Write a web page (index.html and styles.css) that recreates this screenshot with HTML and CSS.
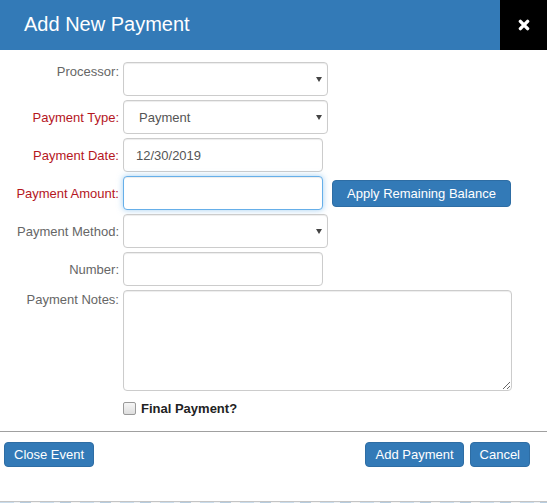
FILE: index.html
```html
<!DOCTYPE html>
<html lang="en">
<head>
  <meta charset="UTF-8" />
  <meta name="viewport" content="width=device-width, initial-scale=1" />
  <title>Add New Payment</title>
  <link rel="stylesheet" href="styles.css">
</head>
<body>

  <div class="modal">
    <div class="modal-header">
      <h2 class="modal-title">Add New Payment</h2>
      <button class="modal-close" type="button" aria-label="Close">
        <svg width="12" height="12" viewBox="0 0 12 12">
          <path d="M2.4 2.4 L9.6 9.6 M9.6 2.4 L2.4 9.6" stroke="#fff" stroke-width="3.4" stroke-linecap="round" />
        </svg>
      </button>
    </div>

    <form class="modal-body">
      <div class="form-grid">
        <label class="form-label label-top" for="processor">Processor:</label>
        <div class="select">
          <select id="processor" class="form-control"><option></option></select>
        </div>

        <label class="form-label required" for="type">Payment Type:</label>
        <div class="select">
          <select id="type" class="form-control"><option>Payment</option></select>
        </div>

        <label class="form-label required" for="date">Payment Date:</label>
        <input id="date" class="form-control input-short" type="text" value="12/30/2019">

        <label class="form-label required" for="amount">Payment Amount:</label>
        <div class="control-group">
          <input id="amount" class="form-control input-short is-focused" type="text">
          <button class="btn btn-apply" type="button">Apply Remaining Balance</button>
        </div>

        <label class="form-label" for="method">Payment Method:</label>
        <div class="select">
          <select id="method" class="form-control"><option></option></select>
        </div>

        <label class="form-label" for="number">Number:</label>
        <input id="number" class="form-control input-short" type="text">

        <label class="form-label label-top" for="notes">Payment Notes:</label>
        <textarea id="notes" class="form-control notes"></textarea>

        <span></span>
        <label class="check">
          <input type="checkbox" class="check-box">
          <span>Final Payment?</span>
        </label>
      </div>
    </form>

    <div class="modal-footer">
      <button class="btn" type="button">Close Event</button>
      <div class="footer-right">
        <button class="btn" type="button">Add Payment</button>
        <button class="btn" type="button">Cancel</button>
      </div>
    </div>
  </div>

  <div class="page-peek"></div>

</body>
</html>
```

FILE: styles.css
```css
body {
  margin: 0;
  font-family: "Liberation Sans", Arial, sans-serif;
  font-size: 13px;
  color: #333;
  background: #fff;
  width: 547px;
  overflow: hidden;
}

.modal {
  height: 501px;
  display: flex;
  flex-direction: column;
  background: #fff;
}

/* header bar */
.modal-header {
  height: 50px;
  display: flex;
  align-items: stretch;
  background: #337ab7;
}

.modal-title {
  flex: 1;
  margin: 0;
  padding: 13px 0 0 24px;
  font-size: 20px;
  font-weight: normal;
  line-height: 23px;
  color: #fff;
}

.modal-close {
  width: 47px;
  border: none;
  padding: 0 0 0 1px;
  background: #000;
  display: flex;
  align-items: center;
  justify-content: center;
  cursor: pointer;
}

/* form */
.modal-body {
  padding: 12px 0 0;
  margin: 0;
}

.form-grid {
  display: grid;
  grid-template-columns: 119px 1fr;
  column-gap: 4px;
  row-gap: 4px;
}

.form-label {
  align-self: center;
  text-align: right;
  line-height: 15px;
  color: #666;
}

.form-label.label-top {
  align-self: start;
  padding-top: 2px;
}

.form-label.required {
  color: #b5161e;
}

.form-control {
  box-sizing: border-box;
  height: 34px;
  margin: 0;
  padding: 6px 12px;
  font-family: inherit;
  font-size: 13px;
  color: #555;
  background: #fff;
  border: 1px solid #ccc;
  border-radius: 4px;
  box-shadow: inset 0 1px 1px rgba(0, 0, 0, 0.075);
  outline: none;
}

.input-short {
  width: 200px;
}

.is-focused {
  border-color: #66afe9;
  box-shadow: inset 0 1px 1px rgba(0, 0, 0, 0.075), 0 0 6px rgba(102, 175, 233, 0.6);
}

.select {
  position: relative;
  width: 205px;
}

.select select {
  width: 100%;
  appearance: none;
  -webkit-appearance: none;
  padding-left: 15px;
}

.select::after {
  content: "";
  position: absolute;
  right: 6px;
  top: 15px;
  border-left: 3px solid transparent;
  border-right: 3px solid transparent;
  border-top: 5px solid #444;
  pointer-events: none;
}

.control-group {
  display: flex;
  align-items: center;
  gap: 9px;
}

.notes {
  width: 389px;
  height: 101px;
  resize: vertical;
}

.check {
  display: flex;
  align-items: center;
  gap: 5px;
  margin-top: 6px;
  font-weight: bold;
  color: #222;
}

.check-box {
  appearance: none;
  -webkit-appearance: none;
  width: 13px;
  height: 13px;
  margin: 0;
  border: 1px solid #9a9a9a;
  border-radius: 2px;
  background: linear-gradient(#f6f6f6, #dedede);
}

/* buttons */
.btn {
  box-sizing: border-box;
  height: 25px;
  padding: 0 9px;
  font-family: inherit;
  font-size: 13px;
  color: #fff;
  background: #337ab7;
  border: 1px solid #2e6da4;
  border-radius: 4px;
  cursor: pointer;
}

.btn:hover {
  background: #286090;
}

.btn-apply {
  height: 27px;
  padding: 0 14px;
}

/* footer */
.modal-footer {
  margin-top: 15px;
  border-top: 1px solid #a0a0a0;
  padding: 10px 17px 0 4px;
  display: flex;
  justify-content: space-between;
}

.footer-right {
  display: flex;
  gap: 6px;
}

.page-peek {
  height: 2px;
  border-top: 1px solid #c4c4c4;
  background: repeating-linear-gradient(90deg, #c9dcec 0 14px, #eef2f6 14px 20px, #b7cde0 20px 31px, #f4f4f4 31px 40px);
}
```
